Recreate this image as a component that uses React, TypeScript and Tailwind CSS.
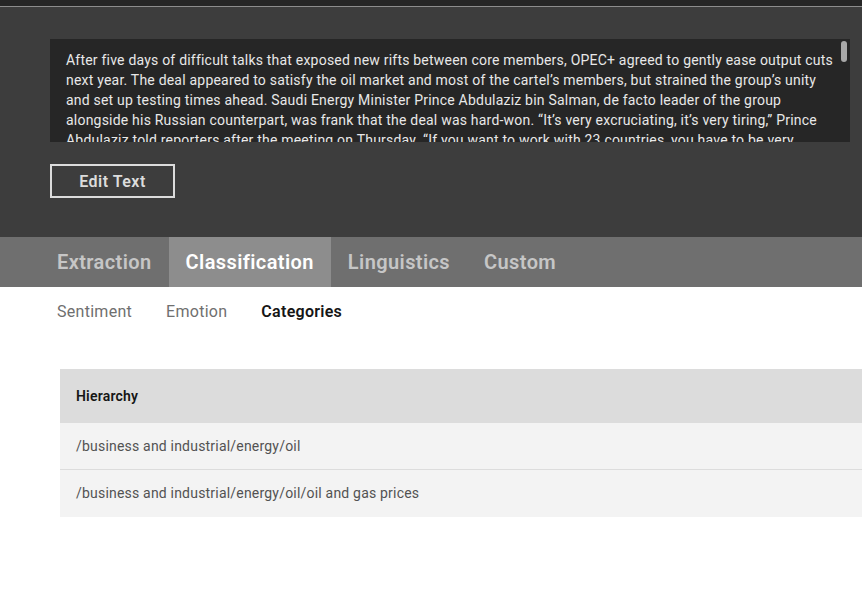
import React from "react";

const TEXT =
  "After five days of difficult talks that exposed new rifts between core members, OPEC+ agreed to gently ease output cuts next year. The deal appeared to satisfy the oil market and most of the cartel\u2019s members, but strained the group\u2019s unity and set up testing times ahead. Saudi Energy Minister Prince Abdulaziz bin Salman, de facto leader of the group alongside his Russian counterpart, was frank that the deal was hard-won. \u201cIt\u2019s very excruciating, it\u2019s very tiring,\u201d Prince Abdulaziz told reporters after the meeting on Thursday. \u201cIf you want to work with 23 countries, you have to be very patient.\u201d";

export default function App() {
  const font = { fontFamily: "Roboto, 'Noto Sans', sans-serif" };
  return (
    <div className="min-h-[596px] w-[862px] bg-white overflow-hidden" style={font}>
      <div className="h-[6px] bg-[#262626]" />
      <div className="h-[1px] bg-[#8d8d8d]" />
      <div className="bg-[#3d3d3d] pt-[32px] pb-[39px] px-[50px] pr-[12px]">
        <div className="relative h-[103px] bg-[#262626] overflow-hidden">
          <div className="pt-[11px] pl-[16px] pr-[12px] text-[14px] leading-[20px] tracking-[0.21px] text-[#e8e8e8]">
            {TEXT}
          </div>
          <div className="absolute right-[3px] top-[2px] h-[21px] w-[6px] rounded-full bg-[#a8a8a8]" />
        </div>
        <button className="mt-[22px] h-[34px] w-[125px] pt-[1px] border-2 border-[#dcdcdc] text-[16px] font-semibold tracking-[0.5px] text-[#dcdcdc] flex items-center justify-center">
          Edit Text
        </button>
      </div>
      <div className="h-[50px] bg-[#6f6f6f] flex pl-[40px] text-[20px] font-semibold tracking-[0.4px]">
        <div className="px-[17px] flex items-center text-[#c6c6c6]">Extraction</div>
        <div className="px-[17px] flex items-center text-white bg-[#8d8d8d]">Classification</div>
        <div className="px-[17px] flex items-center text-[#c6c6c6]">Linguistics</div>
        <div className="px-[17px] flex items-center text-[#c6c6c6]">Custom</div>
      </div>
      <div className="flex pl-[40px] h-[48px] pt-[2px] items-center text-[16px] tracking-[0.28px]">
        <div className="px-[17px] text-[#6f6f6f]">Sentiment</div>
        <div className="px-[17px] text-[#6f6f6f]">Emotion</div>
        <div className="px-[17px] font-semibold text-[#161616]">Categories</div>
      </div>
      <div className="ml-[60px] mt-[34px] text-[14px] tracking-[0.2px]">
        <div className="h-[54px] bg-[#dcdcdc] flex items-center pl-[16px] font-semibold text-[#161616]">Hierarchy</div>
        <div className="h-[47px] bg-[#f3f3f3] border-b border-[#dcdcdc] flex items-center pl-[16px] text-[#525252]">
          /business and industrial/energy/oil
        </div>
        <div className="h-[47px] bg-[#f3f3f3] flex items-center pl-[16px] text-[#525252]">
          /business and industrial/energy/oil/oil and gas prices
        </div>
      </div>
    </div>
  );
}
